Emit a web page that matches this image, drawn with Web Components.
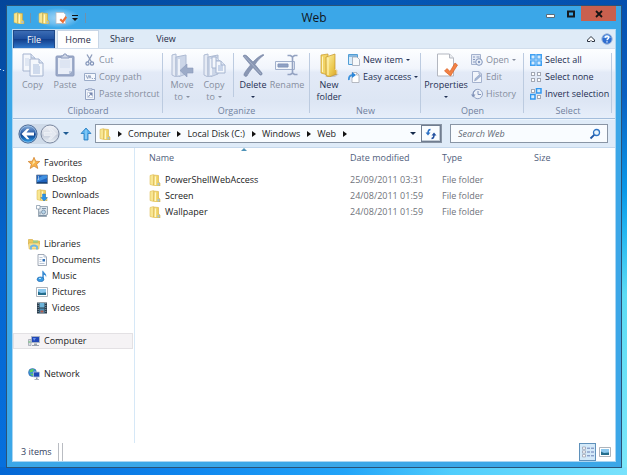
<!DOCTYPE html>
<html lang="en">
<head>
<meta charset="utf-8">
<title>Web</title>
<style>
html, body { margin: 0; height: 100%; }
body { font: 9px/12px "Open Sans", "Noto Sans", sans-serif; color: #1c1c24; overflow: hidden; }
</style>
</head>
<body>
<desktop-shell>
  <app-window>
    <title-bar slot="title" label="Web"></title-bar>
    <ribbon-tabs></ribbon-tabs>
    <ribbon-bar>
      <ribbon-group label="Clipboard" style="width:150px">
        <big-button icon="copy" label="Copy" off style="width:33px;margin-left:3px"></big-button>
        <big-button icon="paste" label="Paste" off style="width:32px"></big-button>
        <div style="margin-left:3px">
          <small-button icon="cut" label="Cut" off></small-button>
          <small-button icon="path" label="Copy path" off></small-button>
          <small-button icon="shortcut" label="Paste shortcut" off></small-button>
        </div>
      </ribbon-group>
      <ribbon-group label="Organize" style="width:147px">
        <big-button icon="moveto" label="Move" more="to" menu off style="width:32px;margin-left:3px"></big-button>
        <big-button icon="copyto" label="Copy" more="to" menu off style="width:32px"></big-button>
        <ribbon-rule></ribbon-rule>
        <big-button icon="delete" label="Delete" menu style="width:34px;margin-left:2px"></big-button>
        <big-button icon="rename" label="Rename" off style="width:34px"></big-button>
      </ribbon-group>
      <ribbon-group label="New" style="width:111px">
        <big-button icon="newfolder" label="New" more="folder" style="width:34px;margin-left:2px"></big-button>
        <div style="margin-left:2px">
          <small-button icon="newitem" label="New item" menu></small-button>
          <small-button icon="easy" label="Easy access" menu></small-button>
        </div>
      </ribbon-group>
      <ribbon-group label="Open" style="width:103px">
        <big-button icon="props" label="Properties" menu style="width:46px;margin-left:2px"></big-button>
        <div style="margin-left:2px">
          <small-button icon="open" label="Open" menu off></small-button>
          <small-button icon="edit" label="Edit" off></small-button>
          <small-button icon="history" label="History" off></small-button>
        </div>
      </ribbon-group>
      <ribbon-group label="Select" style="width:88px">
        <div style="margin-left:6px">
          <small-button icon="selall" label="Select all"></small-button>
          <small-button icon="selnone" label="Select none"></small-button>
          <small-button icon="selinv" label="Invert selection"></small-button>
        </div>
      </ribbon-group>
    </ribbon-bar>
    <address-bar></address-bar>
    <explorer-body>
      <nav-pane slot="nav">
        <nav-section>
          <nav-item icon="star" root>Favorites</nav-item>
          <nav-item icon="desktop">Desktop</nav-item>
          <nav-item icon="downloads">Downloads</nav-item>
          <nav-item icon="recent">Recent Places</nav-item>
        </nav-section>
        <nav-section>
          <nav-item icon="libraries" root>Libraries</nav-item>
          <nav-item icon="document">Documents</nav-item>
          <nav-item icon="music">Music</nav-item>
          <nav-item icon="picture">Pictures</nav-item>
          <nav-item icon="video">Videos</nav-item>
        </nav-section>
        <nav-section>
          <nav-item icon="computer" root current>Computer</nav-item>
        </nav-section>
        <nav-section>
          <nav-item icon="network" root>Network</nav-item>
        </nav-section>
      </nav-pane>
      <file-list></file-list>
    </explorer-body>
    <status-bar>3 items</status-bar>
  </app-window>
</desktop-shell>

<script>
const define = (name, css, html) => customElements.define(name, class extends HTMLElement {
  connectedCallback() {
    if (this.shadowRoot) return;
    const t = document.createElement('template');
    t.innerHTML = `<style>*{box-sizing:border-box}button{font:inherit;color:inherit;background:none;border:0;padding:0;margin:0}${css}</style>` +
      (typeof html === 'function' ? html(this) : html);
    this.attachShadow({ mode: 'open' }).append(t.content.cloneNode(true));
  }
});

const folder = `<defs><linearGradient id="a" x2="1"><stop stop-color="#fbeb9a"/><stop offset="1" stop-color="#e8c342"/></linearGradient></defs>
  <path d="M1 1.500L4.500 .5V11.500L1 10.500Z" fill="#f8e692" stroke="#d9b23c" stroke-width=".5"/><path d="M5 1L9.500 1.500V8L11 9V12H6L4.500 11Z" fill="url(#a)" stroke="#d2a52e" stroke-width=".5"/><path d="M6.500 2.500V11" stroke="#fff6c8"/><path d="M8.500 9h2v2.500h-2z" fill="#a9c3cf"/>`;
const page = (x, y, w, h, f = '#f4f7fc', s = '#a5b4d0') =>
  `<path d="M${x} ${y}h${w - 4}l4 4v${h - 4}h-${w}z" fill="${f}" stroke="${s}"/><path d="M${x + w - 4} ${y}v4h4" fill="#dce4f2" stroke="${s}"/>`;
const greyFolder = `<path d="M2 2L6 1V24L2 22Z" fill="#e6ebf5" stroke="#aebbd3"/><path d="M6 4L16 2V21L8 24L6 23Z" fill="#ccd6e8" stroke="#aebbd3"/><path d="M9 6V22" stroke="#eef2f9" stroke-width="2"/>`;
const square = (x, y, on) => on
  ? `<rect x="${x}.5" y="${y}.5" width="4.500" height="4.500" fill="#d6ebfd" stroke="#2f97ee" stroke-width="1.500"/>`
  : `<rect x="${x}.5" y="${y}.5" width="3" height="3" fill="#fff" stroke="#a3a8b4"/>`;

const icons = {
  folder: [12, 12, folder],
  copy: [24, 24, page(2, 1, 12, 17) + page(9, 6, 13, 17) + `<path d="M12 12h6M12 14h7M12 16h7M12 18h7M12 20h7" stroke="#a9bddd"/><path d="M4 6h4M4 8h4M4 10h4M4 12h4" stroke="#cbd7ea"/>`],
  paste: [24, 24, `<rect x="3" y="3" width="18" height="20" rx="1" fill="#9dabc9" stroke="#8d9cbe"/><path d="M5 5h14v13l-3 3H5z" fill="#e9eef8"/><path d="M7 8h10M7 10h10M7 12h10M7 14h10" stroke="#d2dced"/><path d="M8 5V3h2l1-2h2l1 2h2v2z" fill="#cdd5e5" stroke="#8d9cbe"/><path d="M19 18h-3v3z" fill="#c4cfe3"/>`],
  cut: [12, 12, `<path d="M3 0.500L7.500 8M8 .5L4 8" stroke="#8e9dbb" stroke-width="1.300"/><circle cx="3.500" cy="9.500" r="1.600" fill="none" stroke="#8193b8" stroke-width="1.200"/><circle cx="8" cy="9.500" r="1.600" fill="none" stroke="#8193b8" stroke-width="1.200"/>`],
  path: [12, 12, `<path d="M.5 2.500h11v7H.5z" fill="#f5f8fd" stroke="#9aabc8"/><path d="M2 4l1.500 3.500L5 4M5 7.500l1-3 1 3M8 7.500h1M10 7.500h1" fill="none" stroke="#7f90b2" stroke-width=".8"/>`],
  shortcut: [12, 12, `<path d="M1.500 1.500h9v10h-9z" fill="#f0f4fa" stroke="#93a3c3"/><path d="M4 .5h4v2H4z" fill="#c9d3e5" stroke="#93a3c3" stroke-width=".6"/><path d="M3.500 4.500h5v5h-5z" fill="#fff" stroke="#aebbd3" stroke-width=".6"/><path d="M4.500 9C5 7 6 6.500 7 6.500M5.500 5H8v2.500z" stroke="#7588b0" fill="#7588b0" stroke-width=".7"/>`],
  moveto: [24, 24, greyFolder + `<path d="M23 15v5h-6v4l-7-6.500 7-6.500v4z" fill="#9cabc8" stroke="#8999ba" stroke-width=".6"/>`],
  copyto: [24, 24, greyFolder + page(10, 4, 8, 11) + page(14, 8, 9, 12) + `<path d="M16 13h5M16 15h5M16 17h5" stroke="#9cb2d8"/>`],
  delete: [24, 24, `<path d="M2 3C3 1.500 5 2 6 3L12 9C15 6 18 3 22 1.500L23 2C19 5 16 8 14 11.500L21 20C21.500 21.500 20.500 22.500 19 22L12 14.500C9 18 7 21 6 23C4.500 24 2.500 23 3 21C4.500 18 7 15 9.500 12Z" fill="#8a97b3" stroke="#7281a2" stroke-width=".6"/><path d="M3.500 3L20 21" stroke="#a4b0c8"/>`],
  rename: [24, 24, `<path d="M.5 8.500h19v8H.5z" fill="#f3f6fb" stroke="#a2b1cd"/><path d="M3 11h10v3H3z" fill="#8fa1c4" stroke="#8294b8"/><path d="M12.500 2.500h3l2 1.500 2-1.500h3M12.500 21.500h3l2-1.500 2 1.500h3M17.500 4v16" fill="none" stroke="#93a2c1" stroke-width="1.600"/>`],
  newfolder: [24, 24, `<defs><linearGradient id="f" x2="1" y2="1"><stop stop-color="#fdf0a8"/><stop offset=".6" stop-color="#ecc94f"/><stop offset="1" stop-color="#d79f27"/></linearGradient></defs><path d="M12 21l10 0-4 3H8z" fill="#9a9ca2" opacity=".45"/><path d="M4 2L11 1V22L4 20Z" fill="#f2d466" stroke="#c89a2c" stroke-width=".7"/><path d="M9 4L18 1V16L20 17V21L12 24L9 22.500Z" fill="url(#f)" stroke="#c3932a" stroke-width=".7"/><path d="M5.500 3.500V19" stroke="#fff5c0"/><path d="M11 5V22" stroke="#fff2ae" stroke-width="1.300"/><path d="M18 16l2 1v4" fill="none" stroke="#fff" stroke-width=".8"/>`],
  newitem: [12, 12, `<path d="M.5.5h9v10h-9z" fill="#d8ecfb" stroke="#519ed6"/><path d="M1 2h8" stroke="#3788c8"/><path d="M4.500 3h4.500l2.500 2.500V11.500H4.500z" fill="#f7f9fb" stroke="#9da4b2" stroke-width=".8"/>`],
  easy: [12, 12, `<path d="M4 1.500h4.500l2.500 2.500v7.500H4z" fill="#fff" stroke="#a7abb4" stroke-width=".8"/><path d="M8.500 1.500V4H11" fill="none" stroke="#a7abb4" stroke-width=".7"/><path d="M1 9C.5 6 2 4 5 4" stroke="#3d93de" stroke-width="1.800" fill="none"/><path d="M4 1v6L8 4z" fill="#2d86d8"/>`],
  props: [24, 24, `<path d="M3.500 1h12l4 4v18h-16z" fill="#fff" stroke="#b3b7c0"/><path d="M15.500 1v4h4" fill="#e9ebef" stroke="#b3b7c0"/><path d="M10.500 18L13 15.500L16 18.500L21 10L23.500 12L16.500 23Z" fill="#f28144" stroke="#d95e22" stroke-width=".7"/>`],
  check: [12, 12, `<path d="M1 .5h7.500l2 2v9H1z" fill="#fff" stroke="#b6bac2" stroke-width=".8"/><path d="M4.500 8l1.500-1.500L7.500 8 10.500 4 12 5.500 8 11.500z" fill="#ee6f35"/>`],
  open: [12, 12, `<path d="M.5.5h9v10h-9z" fill="#e4eaf5" stroke="#a4b2ce"/><path d="M2 3h2M2 5.500h2M2 8h2M5.500 3h3" stroke="#8799bd"/><circle cx="8" cy="8" r="3.300" fill="#edf2fa" stroke="#8497bd"/><circle cx="8" cy="8" r="1.200" fill="#8497bd"/>`],
  edit: [12, 12, `<path d="M1.500.5h6.500l2.500 2.500v8.500h-9z" fill="#f2f5fb" stroke="#a4b2ce"/><path d="M8 .5V3h2.500" fill="none" stroke="#a4b2ce"/><path d="M3.500 10l.7-2.500L8.500 3.500l1.500 1.500-4.500 4z" fill="#a4b5d3" stroke="#8a9cc0" stroke-width=".5"/>`],
  history: [12, 12, `<circle cx="6.800" cy="6" r="4.700" fill="#ecf1f9" stroke="#93a4c6"/><path d="M7 3v3.500h3" fill="none" stroke="#8193b9"/><path d="M0 6.500h4.500L2.200 9.500z" fill="#8193b9"/><path d="M2.200 7C2 5 2.500 3 4.500 2" fill="none" stroke="#8193b9"/>`],
  selall: [12, 12, `<path d="M0 0h12v12H0z" fill="#3fa0f2"/><path d="M1.500 1.500h3v3h-3zM7.500 1.500h3v3h-3zM1.500 7.500h3v3h-3zM7.500 7.500h3v3h-3z" fill="#d6ebfd"/><path d="M0 6h12M6 0v12" stroke="#c5e2fb" stroke-width=".8"/>`],
  selnone: [12, 12, square(1, 1) + square(7, 1) + square(1, 7) + square(7, 7)],
  selinv: [12, 12, square(1, 1) + square(6, 0, 1) + square(0, 6, 1) + square(7, 7)],
  back: [20, 20, `<defs><linearGradient id="b" x2="0" y2="1"><stop stop-color="#8fb4de"/><stop offset=".45" stop-color="#2a5ea8"/><stop offset=".5" stop-color="#0c3a86"/><stop offset="1" stop-color="#2fa4ee"/></linearGradient></defs><circle cx="10" cy="10" r="9" fill="url(#b)" stroke="#41608f"/><circle cx="10" cy="10" r="8.200" fill="none" stroke="#b9d6f2" stroke-width=".6"/><path d="M3.500 10L9 4.800H11.500L8.500 8.500H16V11.500H8.500L11.500 15.200H9Z" fill="#fff"/>`],
  forward: [20, 20, `<defs><linearGradient id="g" x2="0" y2="1"><stop stop-color="#f3f5f9"/><stop offset=".5" stop-color="#d3d9e4"/><stop offset=".55" stop-color="#c4ccda"/><stop offset="1" stop-color="#edf2f8"/></linearGradient></defs><circle cx="10" cy="10" r="9" fill="url(#g)" stroke="#7f8ca3"/><path d="M16.500 10L11 4.800H8.500L11.500 8.500H4V11.500H11.500L8.500 15.200H11Z" fill="#e4e9f1" stroke="#f9fafc" stroke-width=".5"/>`],
  up: [12, 14, `<path d="M6 1L11 6.500H8V13H4V6.500H1Z" fill="#5bb4f0" stroke="#2478bd" stroke-width=".8"/><path d="M6 3V12" stroke="#a5daf9"/>`],
  refresh: [12, 12, `<path d="M5.500 1.500C4 1.500 3 3 3 5" fill="none" stroke="#2a6fc4" stroke-width="1.500"/><path d="M.5 4.500h5L3 7.500z" fill="#2a6fc4"/><path d="M6.500 10.500C8 10.500 9 9 9 7" fill="none" stroke="#2451a0" stroke-width="1.500"/><path d="M6.500 7.500h5L9 4.500z" fill="#2451a0"/>`],
  search: [12, 12, `<circle cx="7.500" cy="4.500" r="3" fill="#eaf5fd" stroke="#2f74c4" stroke-width="1.300"/><path d="M5.200 6.800L1.500 10.500" stroke="#1e56a6" stroke-width="1.800"/>`],
  star: [12, 12, `<path d="M6 .3L7.700 4.200L11.800 4.500L8.700 7.200L9.800 11.500L6 9.100L2.200 11.500L3.300 7.200L.2 4.500L4.300 4.200Z" fill="#f8b14a" stroke="#cf7f2c" stroke-width=".7"/><path d="M6 2.500L7 5.500L4 8z" fill="#fde9a8"/>`],
  desktop: [12, 12, `<path d="M.5 2h11v8.500H.5z" fill="#1f62bc" stroke="#6c809b" stroke-width=".8"/><path d="M1 6L7 2.500H11V5L1 9z" fill="#3f8fe0"/><path d="M1 9.800h10" stroke="#123662"/><path d="M2 4h1M2 6h1" stroke="#fff"/>`],
  downloads: [12, 12, folder + `<path d="M6.500 5h3v3.500h2L8 12 4.800 8.500h1.700z" fill="#2793ea" stroke="#1568b8" stroke-width=".4"/>`],
  recent: [12, 12, `<path d="M2.500 1.500h9v8h-1v2h-8z" fill="#dce5ec" stroke="#8696a5" stroke-width=".8"/><path d="M.5.5h3.500v3.500H.5z" fill="#fff" stroke="#7d91a5" stroke-width=".7"/><path d="M6 3.500h4M4 9.500V6.500M3 10.500h7" stroke="#7d91a5"/><circle cx="7.500" cy="7" r="2" fill="#b9d6ea" stroke="#68809a" stroke-width=".7"/>`],
  libraries: [12, 12, `<path d="M.5 1.500h4l1 1.500H11.500V6H.5z" fill="#eec95d" stroke="#d3a83a" stroke-width=".6"/><path d="M5 2.500h5l-.5 3H5z" fill="#9fd08b"/><path d="M.5 5h11l-.7 6H1.200z" fill="#f8e290" stroke="#d5ae48" stroke-width=".6"/><path d="M3 11.500V8.500Q6 6.500 9 8.500V11.500" fill="none" stroke="#6db4e6" stroke-width="1.800"/>`],
  document: [12, 12, `<path d="M2 .5h6l2.500 2.500v8.500H2z" fill="#fbfcfe" stroke="#8b95a5" stroke-width=".8"/><path d="M8 .5V3h2.500M3.500 3.500h3M3.500 5.500h2M3.500 7.500h2M3.500 9.500h5" fill="none" stroke="#a9b9cd" stroke-width=".8"/><path d="M6.500 5h2.500v2.500H6.500z" fill="#2f70b8"/>`],
  music: [12, 12, `<path d="M7 .5C7.500 3 11.500 3.500 10 7.500C10 5.500 9 5 7.800 5V9.500H6.300V1z" fill="#3a8cd4"/><ellipse cx="4.500" cy="9.300" rx="3.400" ry="2.400" fill="#3a9be4" stroke="#2063a8" stroke-width=".6"/><path d="M3 8.500h2" stroke="#b9e2fa"/>`],
  picture: [12, 12, `<path d="M.5 1.500h11v9H.5z" fill="#fff" stroke="#9ba1aa" stroke-width=".8"/><path d="M2 3h8v6H2z" fill="#8cc8ee"/><path d="M2 5.500L5 7L10 6.500V9H2z" fill="#246d8c"/>`],
  video: [12, 12, `<path d="M1 .5h10v11H1z" fill="#2b3c4a"/><path d="M3.500 1h5v4.500h-5z" fill="#6bb2d8"/><path d="M3.500 6.500h5V11h-5z" fill="#4a8cb4"/><path d="M4.500 8.500h3v2h-3z" fill="#b85a48"/><path d="M2.200 1v10.500M9.800 1v10.500" stroke="#8fa2b0" stroke-dasharray="1 1"/>`],
  computer: [12, 12, `<path d="M.5 4.500h2.500v6H.5z" fill="#d9dde4" stroke="#8b929d" stroke-width=".6"/><path d="M3.500 1.500h8v6h-8z" fill="#2248b8" stroke="#a9b3c4"/><path d="M5 3l3 0-2 3z" fill="#6a94ee"/><path d="M6 8.500h3v1.500h2v1H4v-1h2z" fill="#9aa2ae"/><path d="M.5 7h2" stroke="#54b85c"/>`],
  network: [12, 12, `<circle cx="4.500" cy="4.500" r="4" fill="#3a8fdc" stroke="#2a5d9c" stroke-width=".5"/><path d="M1.500 2.500Q4 0 6 1.500L4.500 4 2 4.500zM2 6l3-.5V8z" fill="#5fce5e"/><path d="M5.500 4h6v5h-6z" fill="#1d49b4" stroke="#b8c4d8" stroke-width=".8"/><path d="M8 9.500h1.500V11h1.500v.8H6.500V11H8z" fill="#8d96a6"/>`],
  help: [12, 12, `<circle cx="6" cy="6" r="5.200" fill="#2f6ed0" stroke="#9fb8dc"/><path d="M2 4.500A4.500 4.500 0 0 1 10 4.500Q6 6 2 4.500" fill="#8db8ee"/><path d="M4.300 4.800C4.300 2.600 7.700 2.600 7.700 4.700C7.700 6 6 5.800 6 7.300M6 8.200V9.500" fill="none" stroke="#fff" stroke-width="1.300"/>`],
  details: [12, 12, `<path d="M.5 1h3v2.300h-3zM.5 4.800h3v2.300h-3zM.5 8.600h3v2.300h-3z" fill="#fff" stroke="#9a9fb0" stroke-width=".8"/><path d="M5 2.200h3M9 2.200h3M5 6h3M9 6h3M5 9.800h3M9 9.800h3" stroke="#6a7fb4"/>`],
};
define('ui-icon', ':host{display:block;flex:none}svg{display:block}', el => {
  const [w, h, d] = icons[el.getAttribute('name')];
  return `<svg width="${w}" height="${h}" viewBox="0 0 ${w} ${h}" fill="none" aria-hidden="true">${d}</svg>`;
});
const icon = n => `<ui-icon name="${n}"></ui-icon>`;
define('ui-caret', `:host{display:inline-block;flex:none;border:solid transparent;border-width:3px 3px 0;border-top-color:currentColor;width:0;height:0;vertical-align:middle}
  :host([small]){border-width:2px 2px 0}
  :host([right]){border-width:3px 0 3px 4px;border-color:transparent transparent transparent #111}`, '');

define('desktop-shell', `
  :host{display:flex;height:100%;box-sizing:border-box;padding:5px 5px 7px 6px;
    background:
      linear-gradient(198deg,transparent 45%,#cfe4f8 50%,transparent 55%) 0 68px/7px 5px no-repeat,
      linear-gradient(90deg,#0467d4,#0f86ee 30%,#22a4f8 55%,#50cdfc 72%,#78e2fc) 0 100%/100% 8px no-repeat,
      linear-gradient(#0550ae,#0a60c2 20%,#0a98e8 40%,#22b4f0 48%,#5cdcf4 62%,#7ce8fa) 100% 0/6px 100% no-repeat,
      linear-gradient(#04469a,#0453b0 25%,#0466d0 55%,#0670de) 0 0/7px 100% no-repeat,
      linear-gradient(90deg,#04469a,#0457b4 60%,#0550ae)}
  ::slotted(*){flex:1;min-width:0}`, '<slot></slot>');

define('app-window', `
  :host{display:flex;flex-direction:column;box-sizing:border-box;background:#3ba7e8;border:1px solid #2a5378;padding:0 5px 5px}
  .client{flex:1;min-height:0;display:flex;flex-direction:column;background:#fff;border:1px solid #a9d5f2;border-top-color:#c3def2}
  slot:not([name])::slotted(*){flex:none}
  slot:not([name])::slotted(explorer-body){flex:1}`,
  '<slot name="title"></slot><main class="client"><slot></slot></main>');

define('title-bar', `
  :host{display:grid;grid-template-columns:1fr auto 1fr;height:23px}
  .quick{display:flex;align-items:center;justify-self:start;gap:5px;padding-left:1px;color:#111}
  .tools{display:flex;align-items:center;gap:5px;padding:0 2px;height:20px;background:radial-gradient(closest-side,#9cd3f5,#6fbef0 60%,transparent)}
  i{width:1px;height:10px;background:#7191ab}
  .more{border-top:1px solid #111;padding-top:2px;display:flex;width:6px}
  h1{margin:0;font:12px/23px "Open Sans","Noto Sans",sans-serif;color:#10151c}
  .win{display:flex;justify-self:end}
  .win button{width:20px;height:15px;display:grid;place-items:center}
  .win .close{width:35px;background:#c9604e}
  svg{display:block}`, el => `
  <div class="quick"><button aria-label="Window menu">${icon('folder')}</button><i></i>
    <div class="tools"><button aria-label="New folder">${icon('folder')}</button><button aria-label="Properties">${icon('check')}</button>
    <button class="more" aria-label="Customize"><ui-caret></ui-caret></button></div><i></i></div>
  <h1>${el.getAttribute('label')}</h1>
  <div class="win">
    <button aria-label="Minimize"><svg width="10" height="10"><path d="M.5 5.500h8v3h-8z" fill="#fff" stroke="#5d6c7a"/></svg></button>
    <button aria-label="Maximize"><svg width="10" height="10"><path d="M2 2.500h6v5H2z" fill="none" stroke="#151a20" stroke-width="2"/></svg></button>
    <button class="close" aria-label="Close"><svg width="8" height="8"><path d="M1 1l6 6M7 1L1 7" stroke="#141414" stroke-width="1.800"/></svg></button>
  </div>`);

define('ribbon-tabs', `
  :host{display:flex;gap:2px;height:18px;background:#dfebf7;color:#1f2c46}
  button{width:42px;height:18px;text-align:center}
  .file{background:linear-gradient(#3b6cb4,#1f51a0 45%,#123f8c 50%,#2f77cc);color:#fff;border:1px solid #1f4888;border-bottom:0}
  .home{background:#fff;border:1px solid #c8d6e6;border-bottom:0}
  .end{margin-left:auto;display:flex;gap:5px;align-items:center;padding-right:2px}
  .end button{width:auto;height:auto}`, `
  <button class="file">File</button><button class="home">Home</button><button>Share</button><button>View</button>
  <div class="end"><button aria-label="Minimize the ribbon"><svg width="10" height="8" style="display:block"><path d="M1.500 5L5 1.500L8.500 5V6.500H6L5 5.500L4 6.500H1.500Z" fill="#fff" stroke="#2b3340"/></svg></button><button aria-label="Help">${icon('help')}</button></div>`);

define('ribbon-bar', `:host{display:flex;height:71px;box-sizing:border-box;padding-top:2px;background:linear-gradient(#fdfeff,#f1f5fc 28%,#e3eaf7 34%,#dde6f4 75%,#e6eefa);border-bottom:1px solid #a3bddb;border-top:1px solid #d2deec}`, '<slot></slot>');
define('ribbon-group', `:host{display:flex;flex-direction:column;flex:none;box-sizing:border-box;height:67px;padding-bottom:2px;
    background:linear-gradient(#bccbe0,#bccbe0) 100% 2px/1px 60px no-repeat}
  .items{display:flex;flex:none;height:54px}
  .label{text-align:center;color:#71829e;line-height:12px}`, el => `<div class="items"><slot></slot></div><div class="label">${el.getAttribute('label')}</div>`);
define('ribbon-rule', ':host{display:block;width:1px;height:44px;margin:2px 0 0 3px;background:#bccbe0}', '');
define('big-button', `
  :host{display:block;flex:none;color:#1f2f52}:host([off]){color:#868e9e}
  button{width:100%;padding-top:2px;display:flex;flex-direction:column;align-items:center;line-height:12px;white-space:nowrap}
  ui-icon{margin-bottom:2px}
  .l2{display:flex;align-items:center;gap:3px;height:12px}`, el => `
  <button ${el.hasAttribute('off') ? 'disabled' : ''}>${icon(el.getAttribute('icon'))}<span>${el.getAttribute('label')}</span>
  <span class="l2">${el.getAttribute('more') || ''}${el.hasAttribute('menu') ? '<ui-caret small></ui-caret>' : ''}</span></button>`);
define('small-button', `
  :host{display:block;color:#1f2f52}:host([off]){color:#868e9e}
  button{display:flex;align-items:center;gap:3px;height:17px;white-space:nowrap}`, el => `
  <button ${el.hasAttribute('off') ? 'disabled' : ''}>${icon(el.getAttribute('icon'))}<span>${el.getAttribute('label')}</span>${el.hasAttribute('menu') ? '<ui-caret small></ui-caret>' : ''}</button>`);

define('address-bar', `
  :host{display:flex;align-items:center;height:29px;box-sizing:border-box;padding:0 7px 0 5px;background:#dfebf8;border-top:1px solid #eef5fc;border-bottom:1px solid #c5d8ec}
  .hist{display:flex;gap:2px;background:#cfdbe9;border-radius:10px}
  .recent{color:#1f5c94;margin-left:3px;display:flex}
  .up{margin:0 3px 0 11px}
  .path{flex:1;min-width:0;display:flex;align-items:center;height:19px;border:1px solid #8995a5;background:#f9fcff;padding-left:3px}
  .path a{color:#1c1c24;text-decoration:none;white-space:nowrap}
  .path ui-caret[right]{margin:0 6px 0 7px}
  .drop{margin-left:auto;margin-right:5px;color:#14294a;display:flex}
  .refresh{width:20px;height:17px;border:1px solid #707d90;display:grid;place-items:center;box-shadow:inset -1px -1px #c3ccd6}
  .search{flex:0 1 158px;min-width:0;margin-left:8px;display:flex;align-items:center;height:19px;border:1px solid #8995a5;background:#f9fcff;padding:0 6px 0 7px}
  input{flex:1;min-width:0;border:0;padding:0;background:none;font:inherit;font-style:italic;outline:0}
  input::placeholder{color:#626a76;opacity:1}`, `
  <div class="hist"><button aria-label="Back">${icon('back')}</button><button aria-label="Forward">${icon('forward')}</button></div>
  <button class="recent" aria-label="Recent locations"><ui-caret></ui-caret></button>
  <button class="up" aria-label="Up">${icon('up')}</button>
  <nav class="path">${icon('folder')}<ui-caret right></ui-caret>${['Computer', 'Local Disk (C:)', 'Windows', 'Web'].map(t => `<a href="#">${t}</a><ui-caret right></ui-caret>`).join('')}
    <button class="drop" aria-label="Previous locations"><ui-caret></ui-caret></button><button class="refresh" aria-label="Refresh">${icon('refresh')}</button></nav>
  <div class="search"><input type="search" aria-label="Search Web" placeholder="Search Web">${icon('search')}</div>`);

define('explorer-body', ':host{display:flex;min-height:0}::slotted(file-list){flex:1}', '<slot name="nav"></slot><slot></slot>');
define('nav-pane', ':host{display:flex;flex-direction:column;gap:17px;box-sizing:border-box;width:122px;padding:7px 1px 0 0;border-right:1px solid #d6e8f7}', '<slot></slot>');
define('nav-section', ':host{display:block}', '<slot></slot>');
define('nav-item', `
  :host{display:block}
  a{display:flex;align-items:center;gap:4px;height:16px;padding-left:23px;color:inherit;text-decoration:none}
  :host([root]) a{padding-left:15px}
  :host([current]) a{background:#f5f3f5;outline:1px solid #e3e1e4;outline-offset:-1px}`,
  el => `<a href="#">${icon(el.getAttribute('icon'))}<span><slot></slot></span></a>`);

define('file-list', `
  :host{display:block;min-width:0;position:relative}
  table{width:100%;table-layout:fixed;border-collapse:collapse;text-align:left}
  th{font-weight:400;color:#50607c;height:19px;padding:0}
  td{height:16px;padding:0;color:#70737b}
  .gap td{height:5px}
  th:first-child{padding-left:14px}
  .n{display:flex;align-items:center;gap:4px;padding-left:14px;color:#1c1c24}
  .sort{position:absolute;left:106px;top:0;border:solid transparent;border-width:0 3px 3px;border-bottom-color:#4f93b8}`, `
  <span class="sort"></span>
  <table><colgroup><col style="width:215px"><col style="width:92px"><col style="width:92px"><col></colgroup>
  <thead><tr><th>Name</th><th>Date modified</th><th>Type</th><th>Size</th></tr></thead>
  <tbody><tr class="gap"><td colspan="4"></td></tr>${[['PowerShellWebAccess', '25/09/2011 03:31'], ['Screen', '24/08/2011 01:59'], ['Wallpaper', '24/08/2011 01:59']].map(r =>
    `<tr><td><div class="n">${icon('folder')}<span>${r[0]}</span></div></td><td>${r[1]}</td><td>File folder</td><td></td></tr>`).join('')}</tbody></table>`);

define('status-bar', `
  :host{display:flex;align-items:center;height:18px;padding-left:8px;color:#33415e}
  .sep{width:5px;height:18px;margin-left:6px;border:solid #b9bcc2;border-width:0 1px;box-sizing:border-box}
  .views{margin-left:auto;display:flex;padding-right:2px}
  button{width:17px;height:18px;display:grid;place-items:center}
  .on{background:#d3e9f9;border:1px solid #5f91bb}`, `
  <span><slot></slot></span><span class="sep"></span>
  <div class="views"><button class="on" aria-label="Details view">${icon('details')}</button><button aria-label="Large icons view">${icon('picture')}</button></div>`);
</script>
</body>
</html>
